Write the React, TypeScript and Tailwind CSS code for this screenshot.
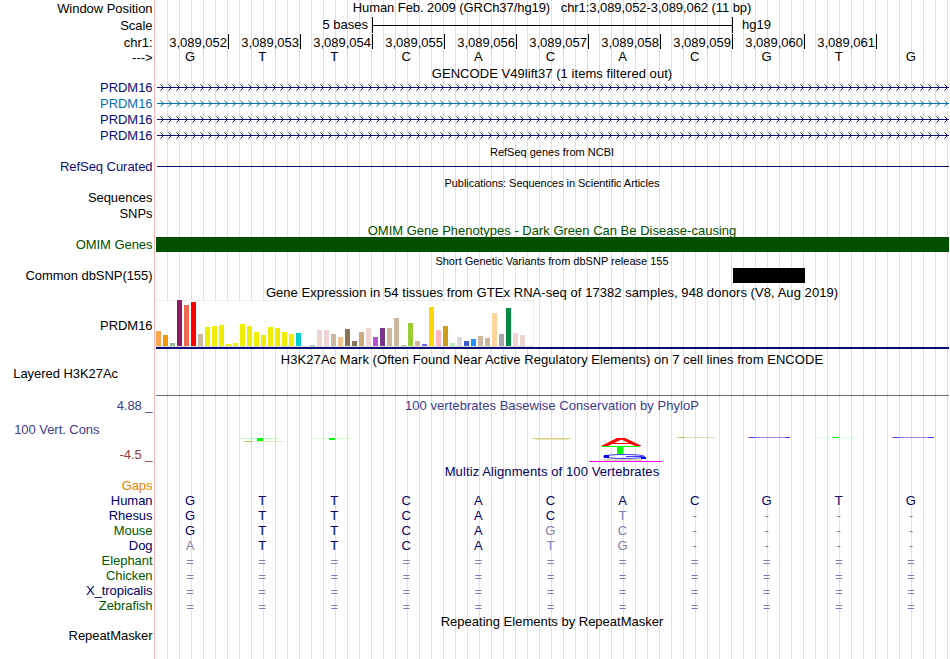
import type { ReactNode } from "react";
import clsx from "clsx";

const positions = [
  "3,089,052", "3,089,053", "3,089,054", "3,089,055", "3,089,056",
  "3,089,057", "3,089,058", "3,089,059", "3,089,060", "3,089,061",
];

const sequence = "GTTCACACGTG";

const transcripts = [
  { label: "text-[#0c0c78]", line: "#0c0c78" },
  { label: "text-[#0c6eb4]", line: "#0c6eb4" },
  { label: "text-[#0c0c78]", line: "#0c0c78" },
  { label: "text-[#0c0c78]", line: "#0c0c78" },
];

// median expression per tissue: [height, color]
const tissues: [number, string][] = [
  [15, "#ffa54f"], [11, "#ee9a00"], [3, "#8fbc8f"], [46, "#8b1c62"], [41, "#ee6a50"], [44, "#ff0000"],
  [12, "#cdb79e"], [19, "#eeee00"], [20, "#eeee00"], [21, "#eeee00"], [2, "#eeee00"], [3, "#eeee00"],
  [22, "#eeee00"], [20, "#eeee00"], [14, "#eeee00"], [11, "#eeee00"], [19, "#eeee00"], [18, "#eeee00"],
  [14, "#eeee00"], [12, "#eeee00"], [13, "#00cdcd"], [0, "#ee82ee"], [1, "#9ac0cd"], [16, "#eed5d2"],
  [16, "#eed5d2"], [12, "#cdb79e"], [9, "#eec591"], [17, "#8b7355"], [5, "#8b7355"], [14, "#cdaa7d"],
  [18, "#eed5d2"], [9, "#b452cd"], [18, "#7a378b"], [18, "#cdb79e"], [28, "#cdb79e"], [1, "#cdb79e"],
  [23, "#9acd32"], [5, "#cdb79e"], [2, "#7a67ee"], [39, "#ffd700"], [16, "#ffb6c1"], [20, "#cd9b1d"],
  [3, "#b4eeb4"], [9, "#d9d9d9"], [5, "#3a5fcd"], [7, "#1e90ff"], [10, "#cdb79e"], [8, "#cdb79e"],
  [33, "#ffd39b"], [12, "#a6a6a6"], [38, "#008b45"], [13, "#eed5d2"], [11, "#eed5d2"], [0, "#ff00ff"],
];

const species = [
  { name: "Human", bases: "GTTCACACGTG", color: "text-[#000064]" },
  { name: "Rhesus", bases: "GTTCACT----", color: "text-[#000064]" },
  { name: "Mouse", bases: "GTTCAGC----", color: "text-[#005a00]" },
  { name: "Dog", bases: "ATTCATG----", color: "text-[#000064]" },
  { name: "Elephant", bases: "===========", color: "text-[#005a00]" },
  { name: "Chicken", bases: "===========", color: "text-[#005a00]" },
  { name: "X_tropicalis", bases: "===========", color: "text-[#000064]" },
  { name: "Zebrafish", bases: "===========", color: "text-[#005a00]" },
];

type RowProps = {
  label?: ReactNode;
  height: string;
  labelClass?: string;
  className?: string;
  children?: ReactNode;
};

function Row({ label, height, labelClass, className, children }: RowProps) {
  return (
    <div className={clsx("flex shrink-0", height)}>
      <div
        className={clsx(
          "w-[154px] shrink-0 text-right tracking-[-0.05px] whitespace-pre",
          labelClass,
          !labelClass?.includes("pr-") && "pr-[1.5px]",
        )}
      >
        {label}
      </div>
      <div className={clsx("w-[795px] shrink-0 border-l border-[#ffb4b4]", className)}>{children}</div>
    </div>
  );
}

function Bases({ bases, reference, className }: { bases: string; reference?: string; className?: string }) {
  return (
    <div className={clsx("flex pl-px", className)}>
      {bases.split("").map((b, i) => (
        <span
          key={i}
          className={clsx(
            "w-[72.09px] shrink-0 pr-1 text-center",
            b === "=" && "pt-px",
            reference && b !== reference[i] && "text-[#7f7fb1]",
          )}
        >
          {b}
        </span>
      ))}
    </div>
  );
}

function Transcript({ color }: { color: string }) {
  return (
    <svg width="794" height="16" className="block" shapeRendering="crispEdges">
      <rect x="2" y="7" width="792" height="1" fill={color} />
      {Array.from({ length: 99 }, (_, i) => (
        <g key={i} transform={`translate(${5 + i * 8} 4)`} fill={color}>
          <path d="M0 0h1v1h-1zM0 6h1v1h-1z" opacity="0.5" />
          <path d="M1 1h1v1h-1zM2 2h1v1h-1zM2 4h1v1h-1zM1 5h1v1h-1z" />
        </g>
      ))}
    </svg>
  );
}

function Conservation() {
  return (
    <svg width="794" height="34" viewBox="155 430 794 34" className="block">
      <rect x="241" y="438" width="37" height="1" fill="#b4ffb4" />
      <rect x="257" y="438" width="6" height="3" fill="#00ff00" />
      <rect x="243" y="441" width="40" height="1" fill="#e4e4c0" />
      <rect x="245" y="441" width="7" height="1" fill="#bcbc50" />
      <rect x="313" y="438" width="37" height="1" fill="#d0ffd0" />
      <rect x="329" y="438" width="6" height="2" fill="#00ff00" />
      <rect x="532" y="438" width="39" height="1" fill="#d4d48c" />
      <rect x="536" y="439" width="32" height="1" fill="#e4e4b4" />
      {/* stacked base logo */}
      <path d="M601 446L617 438H625L642 446H635L621.500 439.500L608 446Z" fill="#ff0000" />
      <rect x="613" y="443" width="18" height="1" fill="#ff0000" />
      <rect x="602" y="446" width="37" height="1" fill="#00ff00" />
      <rect x="617" y="446" width="6" height="8" fill="#00ff00" />
      <ellipse cx="624" cy="456.500" rx="20.500" ry="2" fill="none" stroke="#3c3cff" />
      <rect x="604" y="455" width="5" height="3" fill="#0000ff" />
      <rect x="626" y="456" width="18" height="1" fill="#3c3cff" />
      <rect x="641" y="457" width="5" height="2" fill="#0000ff" />
      <rect x="604" y="459" width="38" height="2" fill="#e0d8b4" />
      <rect x="589" y="461" width="73" height="1" fill="#ff00ff" />
      <rect x="676" y="437" width="39" height="1" fill="#e0e0b4" />
      <rect x="679" y="437" width="5" height="1" fill="#bcbc50" />
      <rect x="748" y="437" width="42" height="1" fill="#8c8cff" />
      <rect x="749" y="437" width="6" height="1" fill="#4646ff" />
      <rect x="785" y="437" width="5" height="1" fill="#4646ff" />
      <rect x="817" y="437" width="38" height="1" fill="#dcffdc" />
      <rect x="833" y="437" width="6" height="1" fill="#00ff00" />
      <rect x="892" y="437" width="42" height="1" fill="#8c8cff" />
      <rect x="893" y="437" width="6" height="1" fill="#4646ff" />
      <rect x="928" y="437" width="6" height="1" fill="#4646ff" />
    </svg>
  );
}

export default function App() {
  return (
    <div className="h-[659px] w-[950px] overflow-hidden bg-white font-['Liberation_Sans',sans-serif] text-[13px] leading-[15px] text-black">
      <div className="flex h-full w-[949px] flex-col bg-[repeating-linear-gradient(to_right,transparent_0px,transparent_11px,#dcdcfa_11px,#dcdcfa_12px)] bg-[length:793px_100%] bg-[position:156px_0px] bg-no-repeat">
        {/* Ruler */}
        <Row
          label="Window Position"
          height="h-[17px]"
          labelClass="pt-px"
          className="text-center tracking-[-0.07px] whitespace-pre"
        >
          Human Feb. 2009 (GRCh37/hg19)   chr1:3,089,052-3,089,062 (11 bp)
        </Row>
        <Row label="Scale" height="h-[17px]" labelClass="pt-px" className="flex">
          <span className="w-[217px] pr-1 text-right">5 bases</span>
          <div className="flex h-4 w-[361px] items-center border-x border-black">
            <div className="h-px w-full bg-black" />
          </div>
          <span className="pl-[9px]">hg19</span>
        </Row>
        <Row label="chr1:" height="h-[15px]" labelClass="pt-px" className="flex pl-[2px]">
          {positions.map((p) => (
            <span key={p} className="w-[72px] shrink-0 border-r border-black pt-px pr-px text-right">{p}</span>
          ))}
        </Row>
        <Row label="--->" height="h-[17px]" labelClass="pt-px">
          <Bases bases={sequence} />
        </Row>

        {/* Genes */}
        <Row height="h-[14px]" className="text-center tracking-[0.05px]">GENCODE V49lift37 (1 items filtered out)</Row>
        {transcripts.map((t, i) => (
          <Row key={i} label="PRDM16" height="h-4" labelClass={t.label}>
            <Transcript color={t.line} />
          </Row>
        ))}
        <Row height="h-[15px]" className="pt-px text-center text-[11px]">RefSeq genes from NCBI</Row>
        <Row label="RefSeq Curated" height="h-4" labelClass="text-[#0c0c78]" className="pt-[7px] pl-[2px]">
          <div className="h-px bg-[#0c0c78]" />
        </Row>

        {/* Literature */}
        <Row height="h-[15px]" className="pt-px text-center text-[11px] tracking-[-0.06px]">
          Publications: Sequences in Scientific Articles
        </Row>
        <Row label="Sequences" height="h-4" />
        <Row label="SNPs" height="h-[17px]" />
        <Row height="h-[14px]" className="text-center text-[#005000]">
          OMIM Gene Phenotypes - Dark Green Can Be Disease-causing
        </Row>
        <Row label="OMIM Genes" height="h-[15px]" labelClass="text-[#005000]" className="flex pl-px">
          <div className="w-full bg-[#005000]" />
        </Row>

        {/* Variation */}
        <Row height="h-4" className="pt-[2px] text-center text-[11px]">
          Short Genetic Variants from dbSNP release 155
        </Row>
        <Row label="Common dbSNP(155)" height="h-[17px]" className="pl-[578px]">
          <div className="h-[15px] w-[72px] bg-black" />
        </Row>

        {/* Expression */}
        <Row height="h-[15px]" className="text-center tracking-[0.055px]">
          Gene Expression in 54 tissues from GTEx RNA-seq of 17382 samples, 948 donors (V8, Aug 2019)
        </Row>
        <Row label="PRDM16" height="h-[49px]" labelClass="pt-[18px]" className="pl-px">
          <div className="flex h-[47px] w-[378px] items-end gap-[2px] border-t border-r border-b border-t-[#eeeeee] border-r-[#eeeeee] border-b-[#dddddd] bg-white">
            {tissues.map(([h, color], i) => (
              <div key={i} className="w-[5px] shrink-0" style={{ height: h, backgroundColor: color }} />
            ))}
          </div>
          <div className="h-[2px] bg-[#0c0c78]" />
        </Row>

        {/* Regulation */}
        <Row height="h-[17px]" className="pt-[3px] text-center tracking-[0.055px]">
          H3K27Ac Mark (Often Found Near Active Regulatory Elements) on 7 cell lines from ENCODE
        </Row>
        <Row label="Layered H3K27Ac" height="h-8" labelClass="pr-[36px]" className="pt-[29px] pl-px">
          <div className="h-px bg-[#78647c]" />
        </Row>

        {/* Conservation */}
        <Row
          height="h-[66px]"
          label={
            <div className="flex flex-col text-[#3c3c8c]">
              <span>4.88 _</span>
              <span className="pt-[9px] pr-[53px]">100 Vert. Cons</span>
              <span className="pt-[10px] text-[#8c3c3c]">-4.5 _</span>
            </div>
          }
        >
          <div className="h-8 text-center tracking-[0.04px] text-[#3c3c8c]">
            100 vertebrates Basewise Conservation by PhyloP
          </div>
          <Conservation />
        </Row>
        <Row height="h-[14px]" className="text-center tracking-[0.1px] text-[#000064]">
          Multiz Alignments of 100 Vertebrates
        </Row>
        <Row label="Gaps" height="h-[15px]" labelClass="text-[#e68200]" />
        {species.map((s) => (
          <Row key={s.name} label={s.name} height="h-[15px]" labelClass={s.color}>
            <Bases bases={s.bases} reference={sequence} className="text-[#000064]" />
          </Row>
        ))}

        {/* Repeats */}
        <Row height="h-[15px]" className="pt-px text-center">Repeating Elements by RepeatMasker</Row>
        <Row label="RepeatMasker" height="h-[31px]" />
      </div>
    </div>
  );
}
